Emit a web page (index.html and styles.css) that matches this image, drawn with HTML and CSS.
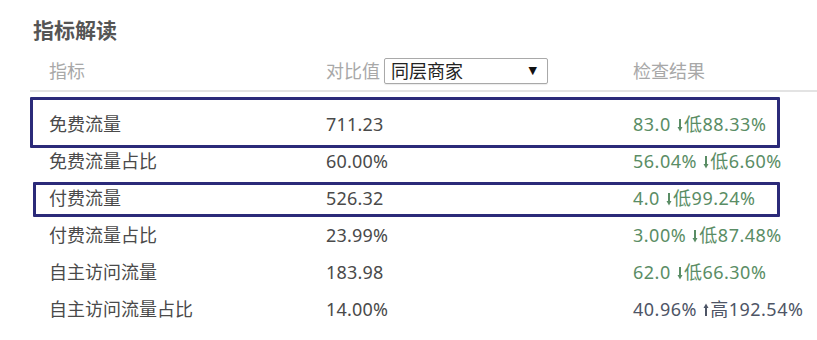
FILE: index.html
```html
<!DOCTYPE html>
<html lang="zh-CN">
<head>
<meta charset="utf-8">
<title>指标解读</title>
<link rel="stylesheet" href="styles.css">
</head>
<body>
<div class="panel">
  <h2 class="title">指标解读</h2>
  <div class="head">
    <div class="c1">指标</div>
    <div class="c2">对比值
      <div class="select"><span>同层商家</span><span class="caret">▼</span></div>
    </div>
    <div class="c3">检查结果</div>
  </div>
  <div class="rows">
    <div class="row mark-tall">
      <div class="c1">免费流量</div><div class="c2">711.23</div>
      <div class="c3 good">83.0 <svg class="arr" viewBox="0 0 6 14"><path d="M3 1V11" /><path class="hd" d="M0.5 9L3 13.5L5.5 9Z"/></svg>低88.33%</div>
    </div>
    <div class="row">
      <div class="c1">免费流量占比</div><div class="c2">60.00%</div>
      <div class="c3 good">56.04% <svg class="arr" viewBox="0 0 6 14"><path d="M3 1V11" /><path class="hd" d="M0.5 9L3 13.5L5.5 9Z"/></svg>低6.60%</div>
    </div>
    <div class="row mark-short">
      <div class="c1">付费流量</div><div class="c2">526.32</div>
      <div class="c3 good">4.0 <svg class="arr" viewBox="0 0 6 14"><path d="M3 1V11" /><path class="hd" d="M0.5 9L3 13.5L5.5 9Z"/></svg>低99.24%</div>
    </div>
    <div class="row">
      <div class="c1">付费流量占比</div><div class="c2">23.99%</div>
      <div class="c3 good">3.00% <svg class="arr" viewBox="0 0 6 14"><path d="M3 1V11" /><path class="hd" d="M0.5 9L3 13.5L5.5 9Z"/></svg>低87.48%</div>
    </div>
    <div class="row">
      <div class="c1">自主访问流量</div><div class="c2">183.98</div>
      <div class="c3 good">62.0 <svg class="arr" viewBox="0 0 6 14"><path d="M3 1V11" /><path class="hd" d="M0.5 9L3 13.5L5.5 9Z"/></svg>低66.30%</div>
    </div>
    <div class="row">
      <div class="c1">自主访问流量占比</div><div class="c2">14.00%</div>
      <div class="c3 high">40.96% <svg class="arr" viewBox="0 0 6 14"><path d="M3 3V13" /><path class="hd" d="M0.5 5L3 0.5L5.5 5Z"/></svg>高192.54%</div>
    </div>
  </div>
</div>
</body>
</html>
```
FILE: styles.css
```css
* { box-sizing: border-box; }
html, body { margin: 0; padding: 0; background: #fff; }
body {
  font-family: "Noto Sans", "Noto Sans CJK SC", sans-serif;
  color: #4a4a4a;
}
.panel {
  width: 817px;
  height: 340px;
  overflow: hidden;
  padding-left: 30px;
}
.title {
  margin: 19px 0 0 3px;
  font-size: 21px;
  line-height: 22px;
  font-weight: 700;
  color: #555;
}
.head {
  margin-top: 17px;
  display: grid;
  grid-template-columns: 296px 307px 1fr;
  align-items: center;
  height: 34px;
  padding-bottom: 8px;
  border-bottom: 2px solid #e3e3e3;
  font-size: 18px;
  line-height: 22px;
  color: #a8a8a8;
}
.head .c1 { padding-left: 19px; }
.head .c2 { display: flex; align-items: center; gap: 4px; }
.select {
  width: 164px;
  height: 26px;
  border: 1px solid #a9a9a9;
  border-radius: 2px;
  box-shadow: 0 1px 1px rgba(0,0,0,0.08);
  display: flex;
  align-items: center;
  justify-content: space-between;
  padding: 0 10px 0 6px;
  font-size: 18px;
  color: #222;
}
.caret { font-size: 11px; color: #111; font-family: "DejaVu Sans", sans-serif; }
.rows { margin-top: 13px; }
.row {
  position: relative;
  display: grid;
  grid-template-columns: 296px 307px 1fr;
  align-items: center;
  height: 37px;
  font-size: 18px;
  line-height: 20px;
}
.row .c1 { padding-left: 19px; }
.row .c2 { letter-spacing: 0.2px; }
.row .c3 { letter-spacing: 0.5px; }
.good { color: #5a8d65; }
.high { color: #4e5566; }
.arr { width: 6px; height: 14px; margin: 0 1px 0 1px; vertical-align: -1px; }
.arr path { stroke: currentColor; stroke-width: 2; fill: none; }
.arr path.hd { fill: currentColor; stroke: none; }
.mark-tall::after, .mark-short::after {
  content: "";
  position: absolute;
  right: 37px;
  border: 3px solid #2b2a79;
  border-radius: 1px;
  pointer-events: none;
}
.mark-tall::after { left: 0; top: -8px; height: 45px; }
.mark-short::after { left: 3px; top: 3px; height: 29px; }
```
